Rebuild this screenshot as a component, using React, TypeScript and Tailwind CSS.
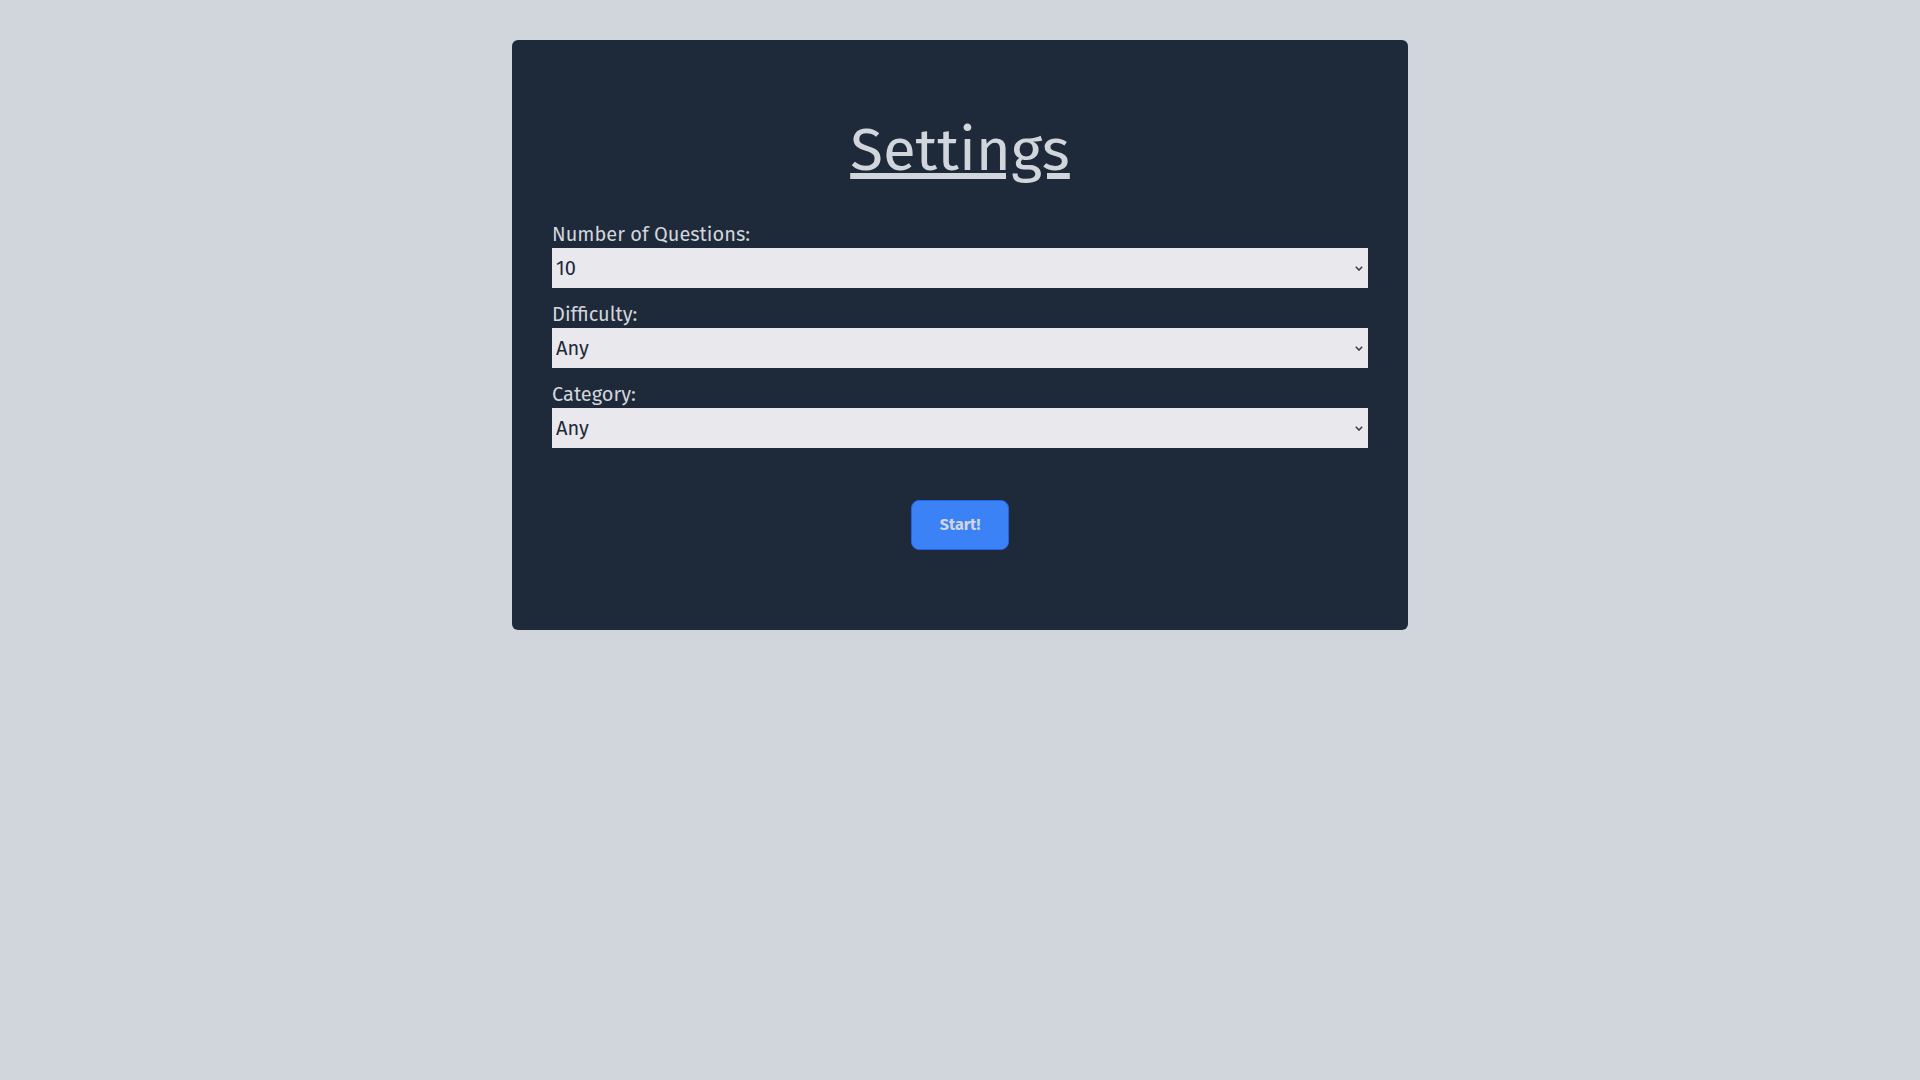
import { useState } from "react";

const font = { fontFamily: '"Fira Sans", "Open Sans", sans-serif' };

type Option = { value: string; label: string };

const Field = ({
  id,
  label,
  value,
  onChange,
  options,
}: {
  id: string;
  label: string;
  value: string;
  onChange: (v: string) => void;
  options: Option[];
}) => (
  <div className="mb-3 flex flex-col">
    <label htmlFor={id} className="text-xl text-gray-300">
      {label}
    </label>
    <div className="relative">
      <select
        id={id}
        value={value}
        onChange={(e) => onChange(e.target.value)}
        className="h-10 w-full appearance-none bg-[#e8e8ed] pl-1 text-xl text-gray-800"
      >
        {options.map((o) => (
          <option key={o.value} value={o.value}>
            {o.label}
          </option>
        ))}
      </select>
      <svg
        className="pointer-events-none absolute top-[18px] right-[5px] h-[5px] w-[8px] text-[#3b404b]"
        viewBox="0 0 8 5"
        fill="none"
      >
        <path d="M0.8 0.8 L4 4 L7.2 0.8" stroke="currentColor" strokeWidth="1.6" />
      </svg>
    </div>
  </div>
);

export default function App() {
  const [amount, setAmount] = useState("10");
  const [difficulty, setDifficulty] = useState("any");
  const [category, setCategory] = useState("any");

  return (
    <main className="min-h-screen bg-gray-300 pt-10" style={font}>
      <section className="mx-auto max-w-4xl rounded-md bg-gray-800 p-10">
        <h1 className="mt-10 mb-10 text-center text-6xl leading-none text-gray-300 underline">Settings</h1>

        <Field
          id="amount"
          label="Number of Questions:"
          value={amount}
          onChange={setAmount}
          options={[
            { value: "5", label: "5" },
            { value: "10", label: "10" },
            { value: "15", label: "15" },
            { value: "20", label: "20" },
          ]}
        />
        <Field
          id="difficulty"
          label="Difficulty:"
          value={difficulty}
          onChange={setDifficulty}
          options={[
            { value: "any", label: "Any" },
            { value: "easy", label: "Easy" },
            { value: "medium", label: "Medium" },
            { value: "hard", label: "Hard" },
          ]}
        />
        <Field
          id="category"
          label="Category:"
          value={category}
          onChange={setCategory}
          options={[
            { value: "any", label: "Any" },
            { value: "9", label: "General Knowledge" },
            { value: "17", label: "Science & Nature" },
            { value: "23", label: "History" },
          ]}
        />

        <div className="mt-[52px] mb-10 flex justify-center">
          <button className="rounded-lg border border-[#2563eb] bg-[#3b82f6] px-7 py-3 text-base font-bold text-gray-300">
            Start!
          </button>
        </div>
      </section>
    </main>
  );
}
